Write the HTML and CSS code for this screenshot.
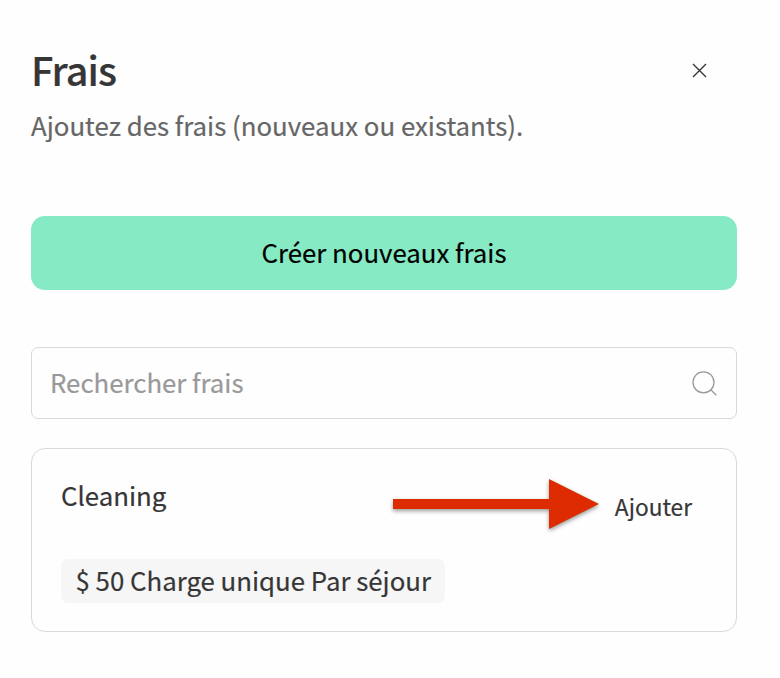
FILE: index.html
```html
<!DOCTYPE html>
<html lang="fr">
<head>
    <meta charset="UTF-8">
    <meta name="viewport" content="width=device-width, initial-scale=1.0">
    <title>Frais</title>
    <link rel="stylesheet" href="styles.css">
</head>
<body>
    <main class="panel">
        <header class="panel-header">
            <div>
                <h1>Frais</h1>
                <p class="subtitle">Ajoutez des frais (nouveaux ou existants).</p>
            </div>
            <button class="close" type="button" aria-label="Fermer">
                <svg width="15" height="15" viewBox="0 0 15 15"><path d="M1 1L14 14M14 1L1 14"/></svg>
            </button>
        </header>

        <button class="create" type="button">Créer nouveaux frais</button>

        <div class="search">
            <span class="placeholder">Rechercher frais</span>
            <svg width="26" height="26" viewBox="0 0 26 26"><circle cx="12.500" cy="12.300" r="10.5"/><path d="M19.8 19.8L25.3 25.3"/></svg>
        </div>

        <!-- Fee card -->
        <section class="card">
            <div class="card-top">
                <h2>Cleaning</h2>
                <button class="add" type="button">Ajouter</button>
            </div>
            <div class="tag">$ 50 Charge unique Par séjour</div>
            <svg class="arrow" width="216" height="60" viewBox="0 0 216 60"><path d="M5 25H161V5L211 30L161 55V35H5Z"/></svg>
        </section>
    </main>
</body>
</html>
```

FILE: styles.css
```css
* {
    box-sizing: border-box;
}

body {
    margin: 0;
    background-color: #fefefe;
    color: #363636;
    font-family: "Noto Sans CJK SC", "Noto Sans", sans-serif;
    font-size: 25.8px;
    -webkit-text-stroke: 0.2px;
}

h1, h2, p {
    margin: 0;
    font-weight: 400;
}

button {
    border: 0;
    padding: 0;
    background: none;
    color: inherit;
    font: inherit;
}

svg {
    display: block;
    fill: none;
}

.panel {
    width: 706px;
    margin-left: 31px;
    padding-top: 44px;
}

.panel-header {
    display: flex;
    justify-content: space-between;
    height: 172px;
}

h1 {
    font-size: 39.5px;
    font-weight: 500;
    letter-spacing: -0.9px;
    line-height: 50px;
}

.subtitle {
    margin-top: 11px;
    color: #666;
    line-height: 40px;
}

.close {
    width: 15px;
    height: 15px;
    margin: 19px 30px 0 0;
}

.close svg {
    stroke: #363636;
    stroke-width: 1.4;
}

.create {
    display: block;
    width: 100%;
    height: 74px;
    padding-bottom: 4px;
    border-radius: 14px;
    background-color: #86ebc4;
    color: #000;
    text-align: center;
}

.search {
    display: flex;
    align-items: center;
    justify-content: space-between;
    height: 72px;
    margin-top: 57px;
    padding: 0 19px 0 18px;
    border: 1px solid #d9d9d9;
    border-radius: 7px;
    color: #999;
}

.placeholder {
    padding-bottom: 4px;
}

.search svg {
    stroke: #999;
    stroke-width: 1.3;
}

.card {
    position: relative;
    height: 184px;
    margin-top: 29px;
    padding: 26px 44px 0 29px;
    border: 1px solid #d9d9d9;
    border-radius: 14px;
}

.card-top {
    display: flex;
    justify-content: space-between;
    height: 84px;
}

h2 {
    font-size: 25.8px;
    line-height: 40px;
}

.add {
    height: 34px;
    margin-top: 15px;
    font-size: 22.7px;
    line-height: 34px;
}

.tag {
    width: 384px;
    height: 44px;
    padding-left: 14.500px;
    border-radius: 7px;
    background-color: #f6f6f6;
    line-height: 41px;
    white-space: nowrap;
}

/* Red arrow pointing at the add button */
.arrow {
    position: absolute;
    top: 25px;
    left: 356px;
    fill: #de2c02;
    filter: drop-shadow(0 2px 2px rgba(0, 0, 0, 0.4));
}
```
